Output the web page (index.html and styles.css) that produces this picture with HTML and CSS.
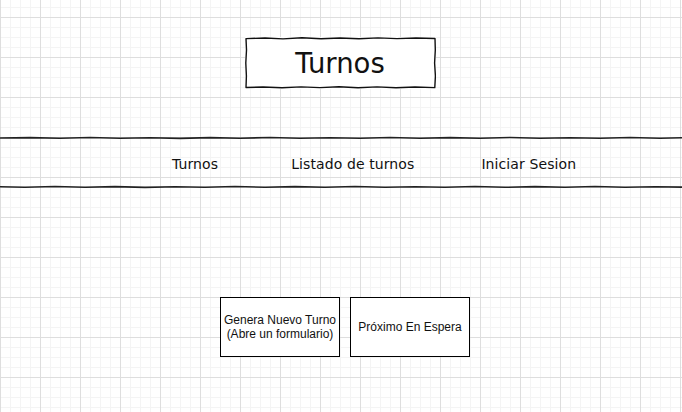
FILE: index.html
```html
<!DOCTYPE html>
<html lang="es">
<head>
    <meta charset="UTF-8">
    <meta name="viewport" content="width=device-width, initial-scale=1.0">
    <title>Turnos</title>
    <link rel="stylesheet" href="styles.css">
</head>
<body>
    <header class="header">
        <div class="title-box">
            <svg class="sketch" viewBox="0 0 191 52" preserveAspectRatio="none">
                <path d="M1 1.6 L20 1 L38 1.9 L57 0.8 L76 1.7 L95 1 L114 1.8 L133 0.9 L152 1.6 L171 1 L190 1.5 L190.3 13 L189.6 26 L190.4 39 L189.8 50.6 L170 50 L151 50.8 L132 49.9 L113 50.7 L94 49.8 L75 50.6 L56 49.9 L37 50.7 L18 50 L1 50.5 L1.4 39 L0.8 26 L1.5 13 Z"/>
            </svg>
            <h1>Turnos</h1>
        </div>
    </header>

    <nav class="nav">
        <svg class="rule" viewBox="0 0 682 4" preserveAspectRatio="none">
            <path d="M0 2 L30 1.6 L60 2.3 L90 1.5 L120 2.2 L150 1.7 L180 2.4 L210 1.6 L240 2.2 L270 1.5 L300 2.3 L330 1.7 L360 2.2 L390 1.5 L420 2.3 L450 1.6 L480 2.2 L510 1.5 L540 2.3 L570 1.7 L600 2.2 L630 1.5 L660 2.3 L682 1.8"/>
        </svg>
        <ul class="nav-links">
            <li>Turnos</li>
            <li>Listado de turnos</li>
            <li class="nav-last">Iniciar Sesion</li>
        </ul>
        <svg class="rule" viewBox="0 0 682 4" preserveAspectRatio="none">
            <path d="M0 1.8 L25 2.3 L55 1.5 L85 2.2 L115 1.6 L145 2.4 L175 1.7 L205 2.2 L235 1.5 L265 2.3 L295 1.6 L325 2.2 L355 1.5 L385 2.3 L415 1.7 L445 2.2 L475 1.5 L505 2.3 L535 1.6 L565 2.2 L595 1.5 L625 2.3 L655 1.7 L682 2.1"/>
        </svg>
    </nav>

    <main class="actions">
        <div class="action-box">Genera Nuevo Turno<br>(Abre un formulario)</div>
        <div class="action-box">Próximo En Espera</div>
    </main>
</body>
</html>
```

FILE: styles.css
```css
/* Page + grid paper */
* {
    box-sizing: border-box;
}

html, body {
    margin: 0;
    padding: 0;
}

body {
    min-height: 412px;
    background-color: #fff;
    background-image:
        linear-gradient(#dedede 1px, transparent 1px),
        linear-gradient(90deg, #dedede 1px, transparent 1px),
        linear-gradient(#f4f4f4 1px, transparent 1px),
        linear-gradient(90deg, #f4f4f4 1px, transparent 1px);
    background-size: 40px 40px, 40px 40px, 10px 10px, 10px 10px;
    background-position: 0 17px;
    font-family: "DejaVu Sans", Verdana, sans-serif;
    color: #111;
}

/* Title */
.header {
    display: flex;
    justify-content: center;
    padding-top: 37px;
}

.title-box {
    position: relative;
    width: 191px;
    height: 52px;
    margin-left: -2px;
    display: flex;
    align-items: center;
    justify-content: center;
    background-color: #fff;
}

.sketch {
    position: absolute;
    top: 0;
    left: 0;
    width: 100%;
    height: 100%;
}

.sketch path {
    fill: none;
    stroke: #111;
    stroke-width: 1.4;
    stroke-linejoin: round;
}

.title-box h1 {
    position: relative;
    margin: 0;
    font-size: 27.5px;
    font-weight: normal;
    line-height: 1;
    padding-top: 1px;
}

/* Nav bar */
.nav {
    margin-top: 47px;
}

.rule {
    display: block;
    width: 100%;
    height: 4px;
}

.rule path {
    fill: none;
    stroke: #222;
    stroke-width: 1.6;
}

.nav-links {
    list-style: none;
    margin: 0;
    padding: 3px 0 0 172px;
    height: 45px;
    display: flex;
    align-items: center;
    gap: 73px;
    font-size: 14px;
    letter-spacing: 0.1px;
}

.nav-links .nav-last {
    margin-left: -6px;
}

/* Buttons */
.actions {
    display: flex;
    gap: 10px;
    padding-left: 220px;
    margin-top: 108px;
}

.action-box {
    width: 120px;
    height: 60px;
    border: 1px solid #000;
    background-color: #fff;
    display: flex;
    align-items: center;
    justify-content: center;
    text-align: center;
    font-family: "Liberation Sans", Arial, sans-serif;
    font-size: 12px;
    line-height: 14px;
}
```
